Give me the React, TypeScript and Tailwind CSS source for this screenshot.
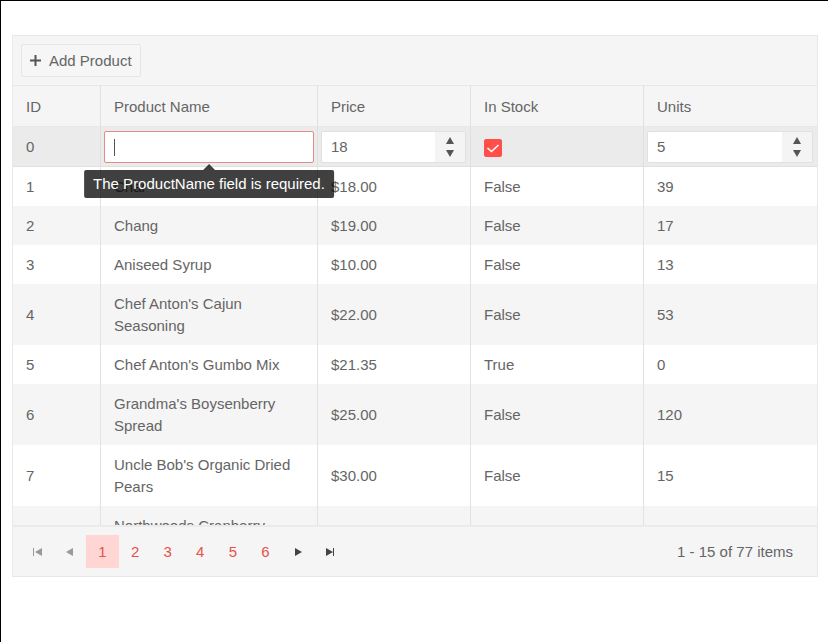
import React, { useState } from "react";

// --- Types ---
interface Product {
  id: number;
  name: string;
  price: string;
  inStock: string;
  units: number;
}

const products: Product[] = [
  { id: 1, name: "Chai", price: "$18.00", inStock: "False", units: 39 },
  { id: 2, name: "Chang", price: "$19.00", inStock: "False", units: 17 },
  { id: 3, name: "Aniseed Syrup", price: "$10.00", inStock: "False", units: 13 },
  { id: 4, name: "Chef Anton's Cajun Seasoning", price: "$22.00", inStock: "False", units: 53 },
  { id: 5, name: "Chef Anton's Gumbo Mix", price: "$21.35", inStock: "True", units: 0 },
  { id: 6, name: "Grandma's Boysenberry Spread", price: "$25.00", inStock: "False", units: 120 },
  { id: 7, name: "Uncle Bob's Organic Dried Pears", price: "$30.00", inStock: "False", units: 15 },
  { id: 8, name: "Northwoods Cranberry Sauce", price: "$40.00", inStock: "False", units: 6 },
];

const pages = [1, 2, 3, 4, 5, 6];

// --- Numeric Editor ---
interface NumericBoxProps {
  label: string;
  initial: number;
}

const NumericBox = ({ label, initial }: NumericBoxProps) => {
  const [value, setValue] = useState(String(initial));
  const step = (amount: number) => setValue(String((Number(value) || 0) + amount));

  return (
    <div className="flex h-8 w-full overflow-hidden rounded-xs border border-[#e0e0e0] bg-white">
      <input
        type="text"
        inputMode="numeric"
        aria-label={label}
        value={value}
        onChange={(e) => setValue(e.target.value)}
        className="min-w-0 flex-1 px-[9px] outline-none"
      />
      <div className="flex w-[30px] flex-col bg-[#f4f4f4]">
        <button
          type="button"
          aria-label={`Increase ${label}`}
          onClick={() => step(1)}
          className="flex flex-1 items-end justify-center pb-[3px]"
        >
          <svg width="8" height="7" viewBox="0 0 8 7" fill="#555">
            <path d="M4 0l4 7H0z" />
          </svg>
        </button>
        <button
          type="button"
          aria-label={`Decrease ${label}`}
          onClick={() => step(-1)}
          className="flex flex-1 items-start justify-center pt-[3px]"
        >
          <svg width="8" height="7" viewBox="0 0 8 7" fill="#555">
            <path d="M0 0h8L4 7z" />
          </svg>
        </button>
      </div>
    </div>
  );
};

// --- Edit Row ---
const EditRow = () => {
  const [name, setName] = useState("");
  const [inStock, setInStock] = useState(true);
  const cell = "h-10 border-b border-l border-[#e0e0e0] px-[3px] py-0";

  return (
    <tr className="bg-[#ebebeb]">
      <td className="h-10 border-b border-[#e0e0e0] px-[13px] py-0">0</td>
      <td className={cell}>
        <div className="relative">
          <input
            type="text"
            aria-label="Product Name"
            aria-invalid={name === ""}
            aria-describedby="name-error"
            value={name}
            onChange={(e) => setName(e.target.value)}
            className="block h-8 w-full rounded-xs border border-[#e58a85] bg-white px-[9px] caret-transparent outline-none"
          />
          {name === "" && (
            <>
              <span className="pointer-events-none absolute top-2 left-[10px] h-[17px] w-px bg-[#555]" />
              <div
                id="name-error"
                role="tooltip"
                className="absolute top-[39px] left-1/2 z-10 h-7 -translate-x-1/2 rounded-xs bg-black/75 px-[9px] leading-7 whitespace-nowrap text-white"
              >
                <svg
                  width="12"
                  height="6"
                  viewBox="0 0 12 6"
                  className="absolute bottom-full left-1/2 -translate-x-1/2 fill-black/75"
                >
                  <path d="M6 0l6 6H0z" />
                </svg>
                The ProductName field is required.
              </div>
            </>
          )}
        </div>
      </td>
      <td className={`${cell} pr-1`}>
        <NumericBox label="Price" initial={18} />
      </td>
      <td className="h-10 border-b border-l border-[#e0e0e0] px-[13px] py-0">
        <label className="relative mt-[2px] block size-[18px]">
          <input
            type="checkbox"
            aria-label="In Stock"
            checked={inStock}
            onChange={(e) => setInStock(e.target.checked)}
            className="block size-[18px] appearance-none rounded-xs border border-[#ccc] bg-white checked:border-[#ff4f48] checked:bg-[#ff4f48]"
          />
          {inStock && (
            <svg
              width="18"
              height="18"
              viewBox="0 0 18 18"
              fill="none"
              stroke="#fff"
              strokeWidth="1.6"
              className="pointer-events-none absolute inset-0"
            >
              <path d="M3.5 9l4 3.5L14.5 6" />
            </svg>
          )}
        </label>
      </td>
      <td className={`${cell} pr-1`}>
        <NumericBox label="Units" initial={5} />
      </td>
    </tr>
  );
};

// --- Pager ---
const Pager = () => {
  const [page, setPage] = useState(1);
  const last = pages.length;
  const arrow = "flex items-center justify-center text-[#444] disabled:text-[#999]";

  return (
    <nav
      aria-label="Pages"
      className="flex items-center justify-between border-t-2 border-[#ebebeb] bg-[#f5f5f5] py-2 pr-6 pl-2"
    >
      <div className="grid h-[33px] w-[326px] grid-cols-10">
        <button type="button" aria-label="First page" disabled={page === 1} onClick={() => setPage(1)} className={arrow}>
          <svg width="9" height="8" viewBox="0 0 9 8" fill="currentColor">
            <path d="M0 0h1v8H0zM9 0v8L2 4z" />
          </svg>
        </button>
        <button type="button" aria-label="Previous page" disabled={page === 1} onClick={() => setPage(page - 1)} className={arrow}>
          <svg width="7" height="8" viewBox="0 0 7 8" fill="currentColor">
            <path d="M7 0v8L0 4z" />
          </svg>
        </button>
        {pages.map((n) => (
          <button
            key={n}
            type="button"
            aria-current={n === page ? "page" : undefined}
            onClick={() => setPage(n)}
            className={`text-[#e8504a] ${n === page ? "bg-[#ffd6d3]" : ""}`}
          >
            {n}
          </button>
        ))}
        <button type="button" aria-label="Next page" disabled={page === last} onClick={() => setPage(page + 1)} className={arrow}>
          <svg width="7" height="8" viewBox="0 0 7 8" fill="currentColor">
            <path d="M0 0v8l7-4z" />
          </svg>
        </button>
        <button type="button" aria-label="Last page" disabled={page === last} onClick={() => setPage(last)} className={arrow}>
          <svg width="9" height="8" viewBox="0 0 9 8" fill="currentColor">
            <path d="M0 0v8l7-4zM7 0h1v8H7z" />
          </svg>
        </button>
      </div>
      <span>1 - 15 of 77 items</span>
    </nav>
  );
};

// --- Main Grid ---
export default function App() {
  return (
    <main className="min-h-screen border-t border-l border-black bg-white pt-[34px] pr-[10px] pl-[11px] font-['Liberation_Sans',Arial,sans-serif] text-[15px] leading-[22px] text-[#656565]">
      <div className="border border-[#e8e8e8]">
        <div className="bg-[#f5f5f5] p-2">
          <button
            type="button"
            className="flex h-[33px] items-center gap-2 rounded-xs border border-[#e6e6e6] bg-[#f6f6f6] px-2"
          >
            <svg width="11" height="11" viewBox="0 0 11 11" fill="none" stroke="#555" strokeWidth="2">
              <path d="M5.5 0v11M0 5.5h11" />
            </svg>
            Add Product
          </button>
        </div>

        <div className="h-[440px] overflow-hidden">
          <table className="w-full table-fixed border-separate border-spacing-0 text-left">
            <colgroup>
              <col className="w-[87px]" />
              <col className="w-[217px]" />
              <col className="w-[153px]" />
              <col className="w-[173px]" />
              <col className="w-[174px]" />
            </colgroup>
            <thead className="bg-[#f5f5f5]">
              <tr>
                {["ID", "Product Name", "Price", "In Stock", "Units"].map((title) => (
                  <th
                    key={title}
                    scope="col"
                    className="h-[42px] border-y border-l border-y-[#e8e8e8] border-l-[#e0e0e0] px-[13px] pt-[2px] pb-0 font-normal first:border-l-0"
                  >
                    {title}
                  </th>
                ))}
              </tr>
            </thead>
            <tbody>
              <EditRow />
              {products.map((product) => (
                <tr
                  key={product.id}
                  className="even:bg-white odd:bg-[#f5f5f5] *:border-l *:border-[#e2e2e2] *:px-[13px] *:pt-[9px] *:pb-2 *:first:border-l-0"
                >
                  <td>{product.id}</td>
                  <td>{product.name}</td>
                  <td>{product.price}</td>
                  <td>{product.inStock}</td>
                  <td>{product.units}</td>
                </tr>
              ))}
            </tbody>
          </table>
        </div>

        <Pager />
      </div>
    </main>
  );
}
